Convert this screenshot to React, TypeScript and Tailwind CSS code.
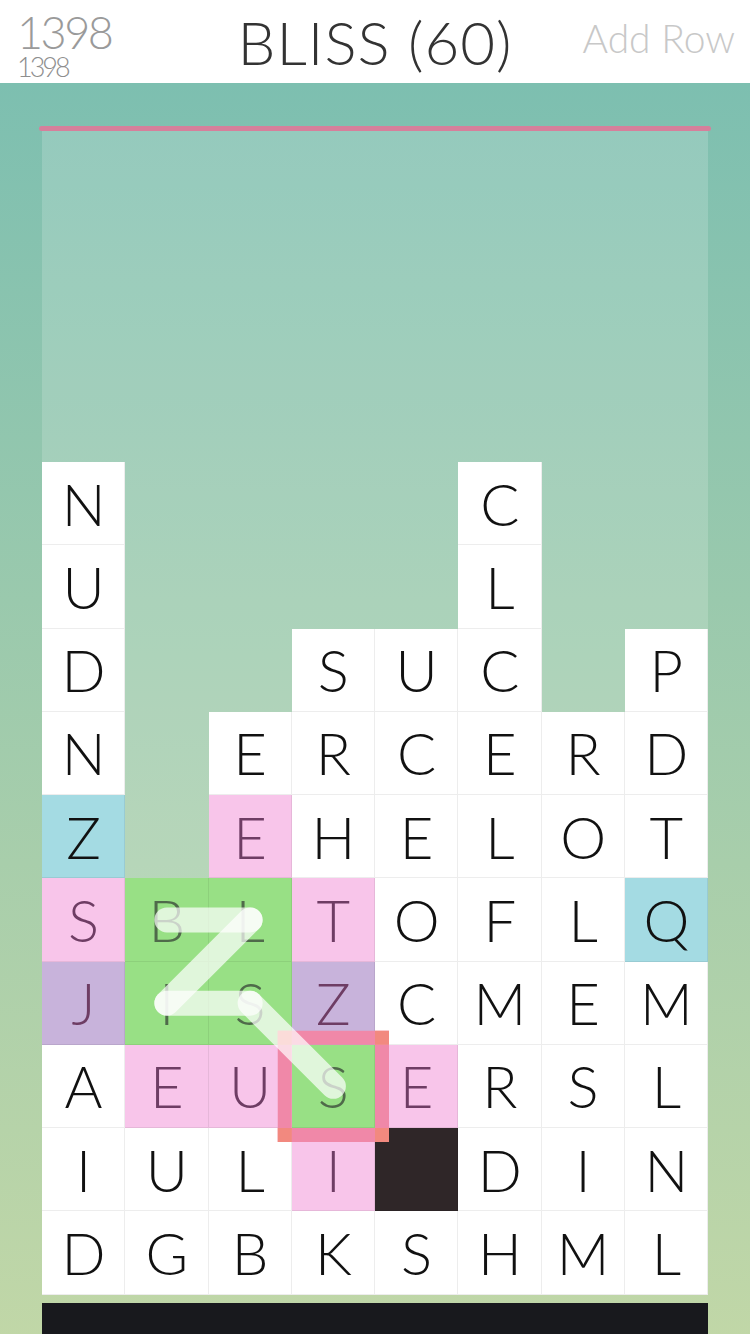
import React from "react";

type Cell = { l: string; c: string } | null;

const W = "w";
const rows: string[][] = [
  ["", "", "", "", "", "", "", ""],
  ["", "", "", "", "", "", "", ""],
  ["", "", "", "", "", "", "", ""],
  ["", "", "", "", "", "", "", ""],
  ["N", "", "", "", "", "C", "", ""],
  ["U", "", "", "", "", "L", "", ""],
  ["D", "", "", "S", "U", "C", "", "P"],
  ["N", "", "E", "R", "C", "E", "R", "D"],
  ["Z:b", "", "E:p", "H", "E", "L", "O", "T"],
  ["S:p", "B:g", "L:g", "T:p", "O", "F", "L", "Q:b"],
  ["J:v", "I:g", "S:g", "Z:v", "C", "M", "E", "M"],
  ["A", "E:p", "U:p", "S:g", "E:p", "R", "S", "L"],
  ["I", "U", "L", "I:p", " :d", "D", "I", "N"],
  ["D", "G", "B", "K", "S", "H", "M", "L"],
];

function parse(s: string): Cell {
  if (s === "") return null;
  const [l, c] = s.split(":");
  return { l, c: c || W };
}

const bgClass: Record<string, string> = {
  w: "bg-white text-[#111111]",
  b: "bg-[#a4dbe3] text-[#111111]",
  p: "bg-[#f8c5ea] text-[#6e3d64]",
  v: "bg-[#c8b3db] text-[#6e3d64]",
  g: "bg-[#98e085] text-[#4f6a4a]",
  d: "bg-[#2f2628] text-[#2f2628]",
};

const S = 83.25;

export default function App() {
  const cx = (c: number) => (c + 0.5) * S;
  const cy = (r: number) => (r + 0.5) * S;
  const pts: [number, number][] = [
    [cx(1), cy(9)],
    [cx(2), cy(9)],
    [cx(1), cy(10)],
    [cx(2), cy(10)],
    [cx(3), cy(11)],
  ];
  const bx = 3 * S;
  const by = 11 * S;
  const t = 14;
  return (
    <div
      className="w-[750px] h-[1334px] overflow-hidden flex flex-col"
      style={{ fontFamily: "Lato, 'Noto Sans', sans-serif" }}
    >
      <header className="h-[83px] bg-white grid grid-cols-[1fr_auto_1fr] items-center shrink-0">
        <div className="self-start pt-[11.5px] pl-[17px] flex flex-col items-start text-[#9a9a9a] font-light">
          <span className="text-[45px] leading-[40px] tracking-[-2.5px]">1398</span>
          <span className="mt-[1.5px] text-[27px] leading-none tracking-[-3px] text-[#8e8e8e]">1398</span>
        </div>
        <div className="text-[60px] font-light text-[#333333] leading-none tracking-[1px]">
          BLISS (60)
        </div>
        <div className="self-start pt-[19px] text-right pr-[15px] text-[39px] font-light text-[#c8c8c8] leading-none">
          Add Row
        </div>
      </header>
      <main className="flex-1 bg-gradient-to-b from-[#7dbfb0] to-[#c1d7a7] px-[42px] pt-[43px]">
        <div className="relative z-10 h-[5px] -mx-[3px] rounded-full bg-[#d67f9b]" />
        <div className="relative -mt-[2px] bg-white/[0.17]">
          <div className="grid grid-cols-8">
            {rows.flat().map((s, i) => {
              const cell = parse(s);
              if (!cell) return <div key={i} className="aspect-square" />;
              return (
                <div
                  key={i}
                  className={`aspect-square flex items-center justify-center text-[58px] font-light leading-none shadow-[inset_-1px_-1px_0_rgba(0,0,0,0.07)] ${bgClass[cell.c]}`}
                >
                  <span>{cell.l}</span>
                </div>
              );
            })}
          </div>
          <svg
            className="absolute inset-0 pointer-events-none overflow-visible"
            width={666}
            height={1165.5}
          >
            <rect x={bx - t} y={by - t} width={S + 2 * t} height={t} fill="#f088a8" />
            <rect x={bx - t} y={by + S} width={S + 2 * t} height={t} fill="#f088a8" />
            <rect x={bx - t} y={by} width={t} height={S} fill="#f088a8" />
            <rect x={bx + S} y={by} width={t} height={S} fill="#f088a8" />
            <rect x={bx - t} y={by - t} width={t} height={t} fill="#f2897f" />
            <rect x={bx + S} y={by - t} width={t} height={t} fill="#f2897f" />
            <rect x={bx - t} y={by + S} width={t} height={t} fill="#f2897f" />
            <rect x={bx + S} y={by + S} width={t} height={t} fill="#f2897f" />
            {pts.slice(0, -1).map((p, i) => (
              <line
                key={i}
                x1={p[0]}
                y1={p[1]}
                x2={pts[i + 1][0]}
                y2={pts[i + 1][1]}
                stroke="#ffffff"
                strokeOpacity={0.7}
                strokeWidth={25}
                strokeLinecap="round"
              />
            ))}
          </svg>
        </div>
        <div className="mt-[8px] h-[40px] bg-[#18191d]" />
      </main>
    </div>
  );
}
